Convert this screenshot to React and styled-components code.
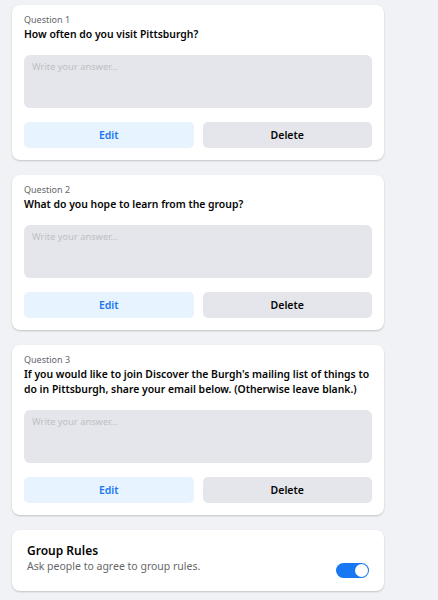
import React from "react";
import styled, { createGlobalStyle } from "styled-components";

const GlobalStyle = createGlobalStyle`
  * { box-sizing: border-box; }
  body {
    margin: 0;
    background: #f0f2f5;
    font-family: "Segoe UI", "Noto Sans", Roboto, sans-serif;
    color: #050505;
  }
`;

const Page = styled.div`
  width: 438px;
  min-height: 600px;
  padding: 5px 54px 0 12px;
  display: flex;
  flex-direction: column;
  gap: 15px;
`;

const Card = styled.div`
  background: #ffffff;
  border-radius: 8px;
  box-shadow: 0 1px 2px rgba(0, 0, 0, 0.2);
  padding: ${props => props.$padding || "9px 12px 12px"};
`;

const QuestionLabel = styled.div`
  font-size: 9px;
  line-height: 12px;
  color: #65676b;
`;

const QuestionText = styled.div`
  font-size: 10.4px;
  line-height: 15px;
  font-weight: 600;
  margin-top: 1px;
`;

const Answer = styled.div`
  margin-top: 13px;
  height: 53px;
  border-radius: 6px;
  background: #e4e6eb;
  padding: 6px 8px;
  font-size: 9.3px;
  line-height: 12px;
  color: #bcc0c4;
`;

const Actions = styled.div`
  margin-top: 14px;
  display: grid;
  grid-template-columns: 1fr 1fr;
  gap: 9px;
`;

const Button = styled.button`
  height: 26px;
  border: 0;
  border-radius: 5px;
  font-family: inherit;
  font-size: 10.5px;
  font-weight: 600;
  background: ${props => (props.$primary ? "#e7f3ff" : "#e4e6eb")};
  color: ${props => (props.$primary ? "#1877f2" : "#050505")};
  cursor: pointer;
`;

const RulesRow = styled.div`
  display: flex;
  align-items: flex-end;
  justify-content: space-between;
`;

const RulesTitle = styled.div`
  font-size: 12px;
  line-height: 17px;
  font-weight: 600;
`;

const RulesSub = styled.div`
  font-size: 10.5px;
  line-height: 15px;
  color: #65676b;
`;

const Toggle = styled.div`
  width: 33px;
  height: 15px;
  border-radius: 8px;
  background: #1877f2;
  position: relative;
  margin-bottom: -4px;

  &::after {
    content: "";
    position: absolute;
    right: 1px;
    top: 1px;
    width: 13px;
    height: 13px;
    border-radius: 50%;
    background: #fff;
  }
`;

const questions = [
  "How often do you visit Pittsburgh?",
  "What do you hope to learn from the group?",
  "If you would like to join Discover the Burgh's mailing list of things to do in Pittsburgh, share your email below. (Otherwise leave blank.)",
];

export default function App() {
  return (
    <>
      <GlobalStyle />
      <Page>
        {questions.map((q, i) => (
          <Card key={i}>
            <QuestionLabel>Question {i + 1}</QuestionLabel>
            <QuestionText>{q}</QuestionText>
            <Answer>Write your answer...</Answer>
            <Actions>
              <Button $primary>Edit</Button>
              <Button>Delete</Button>
            </Actions>
          </Card>
        ))}
        <Card $padding="12px 15px 17px">
          <RulesRow>
            <div>
              <RulesTitle>Group Rules</RulesTitle>
              <RulesSub>Ask people to agree to group rules.</RulesSub>
            </div>
            <Toggle />
          </RulesRow>
        </Card>
      </Page>
    </>
  );
}
